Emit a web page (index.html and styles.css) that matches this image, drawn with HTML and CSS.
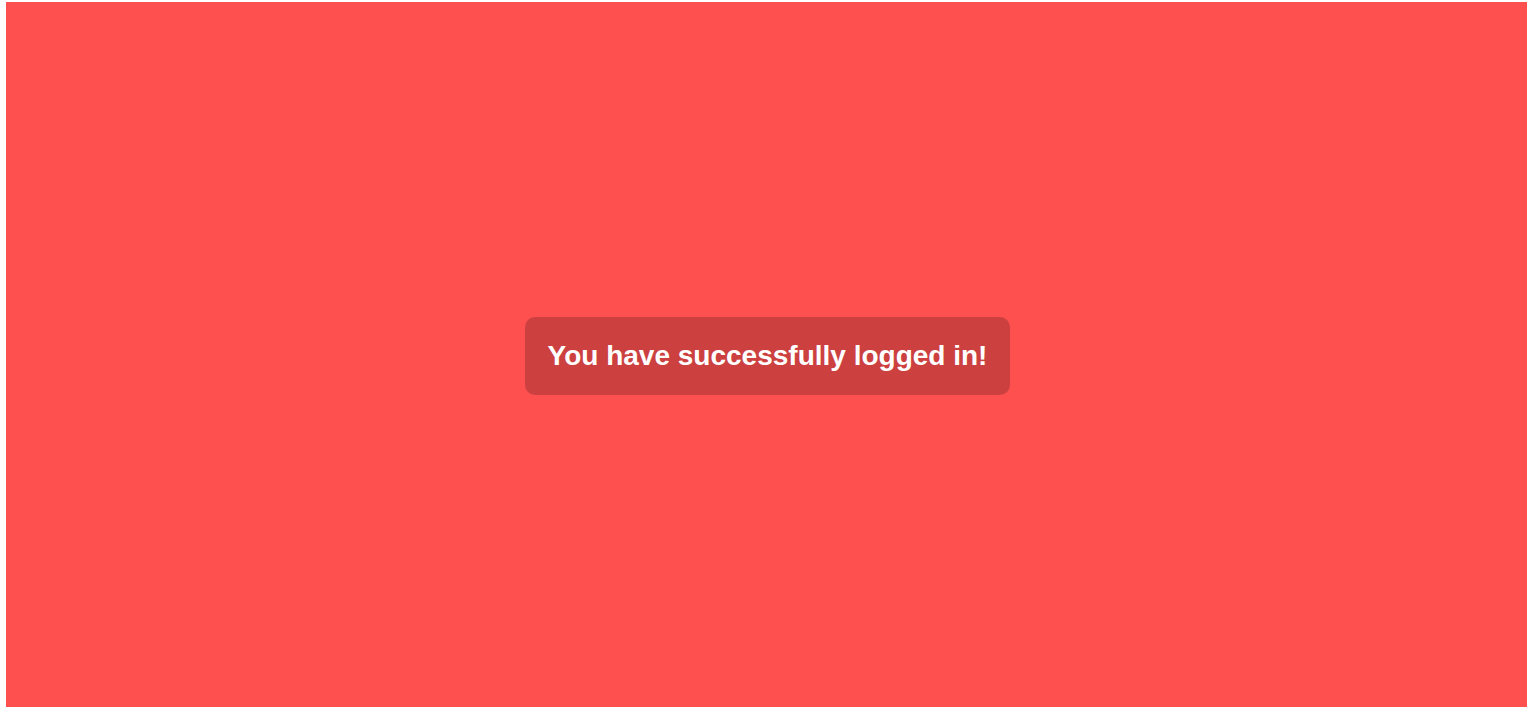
FILE: index.html
```html
<!DOCTYPE html>
<html lang="en">
<head>
<meta charset="utf-8">
<title>Logged in</title>
<link rel="stylesheet" href="styles.css">
</head>
<body>
<main class="screen">
  <div class="toast">You have successfully logged in!</div>
</main>
</body>
</html>
```
FILE: styles.css
```css
html, body {
  margin: 0;
  padding: 0;
  background: #ffffff;
}
body {
  padding: 2px 0 0 6px;
  font-family: "Liberation Sans", Arial, sans-serif;
}
.screen {
  width: 1521px;
  height: 705px;
  background: #ff5050;
  display: flex;
  align-items: center;
  justify-content: center;
}
.toast {
  background: #cc4040;
  color: #ffffff;
  font-weight: bold;
  font-size: 28px;
  line-height: 30px;
  padding: 24px 23px;
  border-radius: 10px;
  transform: translate(1px, 1px);
}
```
